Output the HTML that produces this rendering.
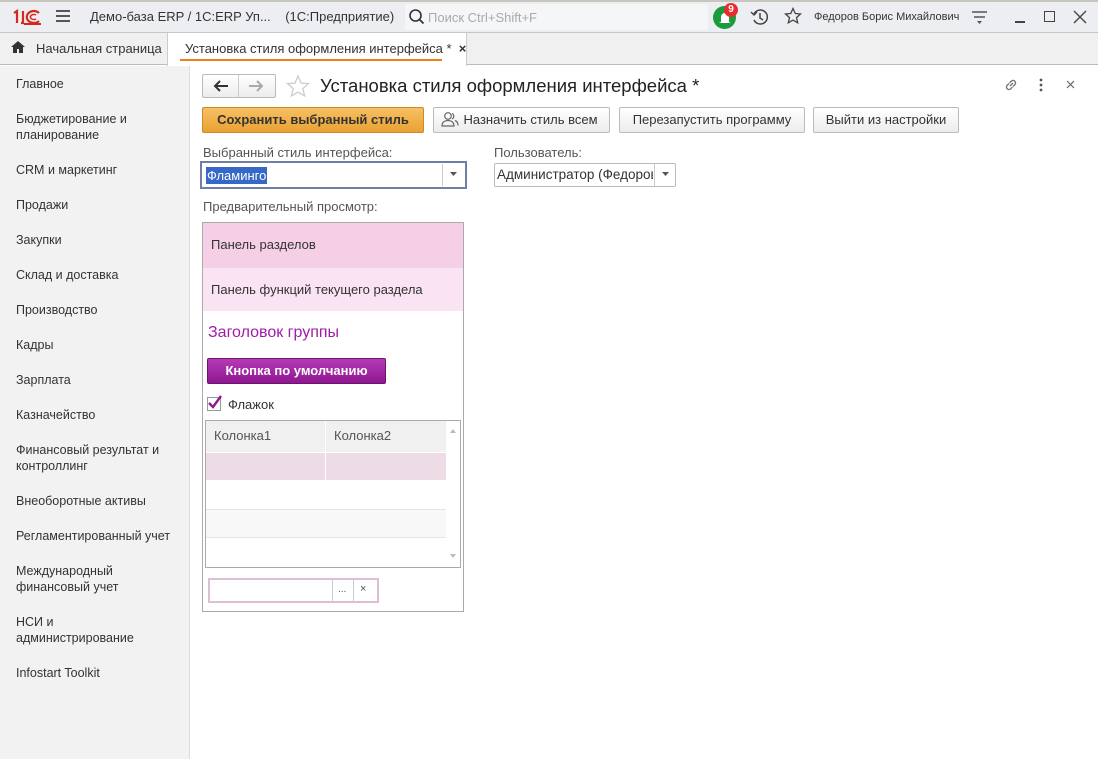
<!DOCTYPE html>
<html><head><meta charset="utf-8"><style>
*{box-sizing:border-box;margin:0;padding:0}
body{width:1098px;height:759px;overflow:hidden;font-family:"Liberation Sans",sans-serif;font-size:13px;color:#333;background:#fff;position:relative}
.a{position:absolute;white-space:nowrap}
.btn{position:absolute;height:26px;border:1px solid #bbb;border-radius:2px;background:linear-gradient(#fff,#ececec);font-size:13px;text-align:center;line-height:24px;color:#333}
.side div{position:absolute;left:16px;font-size:12.5px;color:#333;line-height:16px}
svg{position:absolute}
</style></head><body>
<div class="a" style="left:0;top:0;width:1098px;height:33px;background:#eceef2;border-top:2px solid #c8c4be;border-bottom:1px solid #c6c6c6"></div>
<svg style="left:12px;top:9px" width="30" height="16" viewBox="0 0 30 16"><path d="M2 4l3-2v12M9 14h2V2" stroke="#d42a1e" stroke-width="2.2" fill="none"/><path d="M27 4a7 6 0 1 0 0 8" stroke="#d42a1e" stroke-width="2.2" fill="none"/><path d="M24 6a3.5 2.5 0 1 0 0 4" stroke="#d42a1e" stroke-width="1.5" fill="none"/><path d="M12 15h17" stroke="#d42a1e" stroke-width="2"/></svg>
<div class="a" style="left:56px;top:10px;width:14px;height:2px;background:#555;box-shadow:0 5px 0 #555,0 10px 0 #555"></div>
<div class="a" style="left:90px;top:9px;font-size:13px;color:#333">Демо-база ERP / 1С:ERP Уп...&nbsp;&nbsp;&nbsp; (1С:Предприятие)</div>
<div class="a" style="left:405px;top:4px;width:303px;height:26px;background:#f5f6f8;border-radius:2px"></div>
<svg style="left:408px;top:8px" width="18" height="18"><circle cx="7.5" cy="7.5" r="5.5" stroke="#333" stroke-width="1.6" fill="none"/><path d="M11.5 11.5l4 4" stroke="#333" stroke-width="1.8"/></svg>
<div class="a" style="left:428px;top:10px;color:#aaa;font-size:13px">Поиск Ctrl+Shift+F</div>
<div class="a" style="left:713px;top:6px;width:23px;height:23px;border-radius:50%;background:#1c9a3e"></div>
<svg style="left:716px;top:9px" width="18" height="18"><path d="M5 13V8a4 4 0 0 1 8 0v5l2 1H3z" fill="#fff"/></svg>
<div class="a" style="left:724px;top:3px;width:14px;height:14px;border-radius:50%;background:#e62e2e;color:#fff;font-size:10px;font-weight:bold;text-align:center;line-height:14px">9</div>
<svg style="left:750px;top:8px" width="20" height="18"><path d="M4 6a7 7 0 1 1 0 6" stroke="#444" stroke-width="1.5" fill="none"/><path d="M1 4l3 3 3-3" stroke="#444" stroke-width="1.4" fill="none"/><path d="M10 5v5l3 2" stroke="#444" stroke-width="1.5" fill="none"/></svg>
<svg style="left:784px;top:7px" width="18" height="18"><path d="M9 1.5l2.3 5 5.2.5-4 3.6 1.2 5.2L9 13.1l-4.7 2.7 1.2-5.2-4-3.6 5.2-.5z" stroke="#444" stroke-width="1.3" fill="none"/></svg>
<div class="a" style="left:814px;top:11px;font-size:11px;color:#333">Федоров Борис Михайлович</div>
<svg style="left:971px;top:10px" width="18" height="16"><path d="M1 2h15M3 7h11" stroke="#555" stroke-width="1.5"/><path d="M6 11h5l-2.5 3z" fill="#555"/></svg>
<div class="a" style="left:1015px;top:21px;width:10px;height:1.5px;background:#444"></div>
<div class="a" style="left:1044px;top:11px;width:11px;height:11px;border:1.5px solid #444"></div>
<svg style="left:1073px;top:10px" width="14" height="14"><path d="M1 1l12 12M13 1L1 13" stroke="#444" stroke-width="1.4"/></svg>

<div class="a" style="left:0;top:33px;width:1098px;height:32px;background:#f0f0f0;border-bottom:1px solid #bbb"></div>
<svg style="left:10px;top:40px" width="16" height="14"><path d="M8 1L1 7h2v6h4V9h2v4h4V7h2z" fill="#333"/></svg>
<div class="a" style="left:36px;top:41px;font-size:13px">Начальная страница</div>
<div class="a" style="left:167px;top:33px;width:300px;height:33px;background:#fff;border-left:1px solid #ccc;border-right:1px solid #ccc"></div>
<div class="a" style="left:185px;top:41px;font-size:13px">Установка стиля оформления интерфейса *&nbsp; <b>×</b></div>
<div class="a" style="left:180px;top:59px;width:262px;height:2px;background:#f07e13"></div>

<div class="a" style="left:0;top:66px;width:190px;height:693px;background:#f2f2f2;border-right:1px solid #ddd"></div>
<div class="side">
<div style="top:76px">Главное</div>
<div style="top:111px">Бюджетирование и<br>планирование</div>
<div style="top:162px">CRM и маркетинг</div>
<div style="top:197px">Продажи</div>
<div style="top:232px">Закупки</div>
<div style="top:267px">Склад и доставка</div>
<div style="top:302px">Производство</div>
<div style="top:337px">Кадры</div>
<div style="top:372px">Зарплата</div>
<div style="top:407px">Казначейство</div>
<div style="top:442px">Финансовый результат и<br>контроллинг</div>
<div style="top:493px">Внеоборотные активы</div>
<div style="top:528px">Регламентированный учет</div>
<div style="top:563px">Международный<br>финансовый учет</div>
<div style="top:614px">НСИ и<br>администрирование</div>
<div style="top:665px">Infostart Toolkit</div>
</div>

<div class="btn" style="left:202px;top:74px;width:74px;height:24px;padding:0"></div>
<div class="a" style="left:238px;top:75px;width:1px;height:22px;background:#ccc"></div>
<svg style="left:212px;top:79px" width="18" height="14"><path d="M16 7H3M8 2L3 7l5 5" stroke="#333" stroke-width="2" fill="none"/></svg>
<svg style="left:247px;top:79px" width="18" height="14"><path d="M2 7h13M10 2l5 5-5 5" stroke="#aaa" stroke-width="2" fill="none"/></svg>
<svg style="left:286px;top:74px" width="24" height="24"><path d="M12 2l3 7 7.5.6-5.7 5 1.8 7.3L12 18l-6.6 3.9 1.8-7.3-5.7-5L9 9z" stroke="#ccc" stroke-width="1.3" fill="none"/></svg>
<div class="a" style="left:320px;top:75px;font-size:18.5px;color:#222">Установка стиля оформления интерфейса *</div>
<svg style="left:1003px;top:77px" width="16" height="16"><path d="M7 9l3-3M6 6.5L4 8.5a2.5 2.5 0 0 0 3.5 3.5l2-2M10 9.5l2-2A2.5 2.5 0 0 0 8.5 4l-2 2" stroke="#777" stroke-width="1.4" fill="none"/></svg>
<svg style="left:1037px;top:78px" width="8" height="14"><circle cx="4" cy="2" r="1.4" fill="#555"/><circle cx="4" cy="7" r="1.4" fill="#555"/><circle cx="4" cy="12" r="1.4" fill="#555"/></svg>
<svg style="left:1066px;top:80px" width="9" height="9"><path d="M1 1l7 7M8 1L1 8" stroke="#666" stroke-width="1.2"/></svg>

<div class="btn" style="left:202px;top:107px;width:222px;background:linear-gradient(#f7c063,#e8a232);border-color:#c98a2a;font-weight:bold;color:#333">Сохранить выбранный стиль</div>
<div class="btn" style="left:433px;top:107px;width:177px;padding-left:18px">Назначить стиль всем</div>
<svg style="left:441px;top:111px" width="18" height="17"><circle cx="7" cy="5" r="3.3" stroke="#666" stroke-width="1.2" fill="none"/><path d="M1 15c0-4 3-5.5 6-5.5s6 1.5 6 5.5z" stroke="#666" stroke-width="1.2" fill="none"/><path d="M11 2.5a3 3 0 0 1 0 5.5M14 9.5c2 .7 3 2.2 3 5" stroke="#666" stroke-width="1.2" fill="none"/></svg>
<div class="btn" style="left:619px;top:107px;width:186px">Перезапустить программу</div>
<div class="btn" style="left:813px;top:107px;width:146px">Выйти из настройки</div>

<div class="a" style="left:203px;top:145px;color:#555">Выбранный стиль интерфейса:</div>
<div class="a" style="left:200px;top:161px;width:267px;height:28px;border:2px solid #6e7fa8"></div>
<div class="a" style="left:206px;top:167px;background:#3669c7;color:#fff;padding:0 1px;line-height:17px">Фламинго</div>
<div class="a" style="left:442px;top:164px;width:1px;height:22px;background:#ccc"></div>
<svg style="left:450px;top:172px" width="7" height="4"><path d="M0 0h7L3.5 4z" fill="#555"/></svg>
<div class="a" style="left:494px;top:145px;color:#555">Пользователь:</div>
<div class="a" style="left:494px;top:163px;width:182px;height:24px;border:1px solid #bbb;border-radius:2px"></div>
<div class="a" style="left:497px;top:167px;font-size:13.5px;color:#333;width:156px;overflow:hidden">Администратор (Федоров</div>
<div class="a" style="left:654px;top:164px;width:1px;height:22px;background:#ccc"></div>
<svg style="left:662px;top:172px" width="7" height="4"><path d="M0 0h7L3.5 4z" fill="#555"/></svg>
<div class="a" style="left:203px;top:199px;color:#555">Предварительный просмотр:</div>

<div class="a" style="left:202px;top:222px;width:262px;height:390px;border:1px solid #aaa"></div>
<div class="a" style="left:203px;top:223px;width:260px;height:45px;background:#f5cfe6"></div>
<div class="a" style="left:211px;top:237px;color:#333">Панель разделов</div>
<div class="a" style="left:203px;top:268px;width:260px;height:43px;background:#fae3f2"></div>
<div class="a" style="left:211px;top:282px;color:#333">Панель функций текущего раздела</div>
<div class="a" style="left:208px;top:324px;font-size:16px;color:#a01ca8">Заголовок группы</div>
<div class="a" style="left:207px;top:358px;width:179px;height:26px;border:1px solid #6e1370;border-radius:2px;background:linear-gradient(#b53ab6,#8e1890);color:#fff;font-weight:bold;text-align:center;line-height:24px">Кнопка по умолчанию</div>
<div class="a" style="left:207px;top:397px;width:14px;height:14px;border:1px solid #999;background:#fff"></div>
<svg style="left:207px;top:394px" width="16" height="16"><path d="M2 9l4 4 8-11" stroke="#8e1890" stroke-width="2.4" fill="none"/></svg>
<div class="a" style="left:228px;top:397px;color:#333">Флажок</div>
<div class="a" style="left:205px;top:420px;width:256px;height:148px;border:1px solid #aaa"></div>
<div class="a" style="left:206px;top:421px;width:240px;height:31px;background:#f0f0f0"></div>
<div class="a" style="left:325px;top:421px;width:1px;height:58px;background:#fff"></div>
<div class="a" style="left:214px;top:428px;color:#555">Колонка1</div>
<div class="a" style="left:334px;top:428px;color:#555">Колонка2</div>
<div class="a" style="left:206px;top:453px;width:240px;height:27px;background:#eddce5"></div>
<div class="a" style="left:325px;top:453px;width:1px;height:27px;background:#fff"></div>
<div class="a" style="left:206px;top:509px;width:240px;height:29px;background:#f8f8f8;border-top:1px solid #e6e6e6;border-bottom:1px solid #e6e6e6"></div>
<svg style="left:450px;top:429px" width="6" height="4"><path d="M0 4h6L3 0z" fill="#bbb"/></svg>
<svg style="left:450px;top:554px" width="6" height="4"><path d="M0 0h6L3 4z" fill="#bbb"/></svg>
<div class="a" style="left:208px;top:578px;width:171px;height:25px;border:2px solid #dcbfd3"></div>
<div class="a" style="left:332px;top:580px;width:1px;height:21px;background:#ccc"></div>
<div class="a" style="left:353px;top:580px;width:1px;height:21px;background:#ccc"></div>
<div class="a" style="left:338px;top:584px;font-size:10px;color:#555">...</div>
<div class="a" style="left:360px;top:583px;font-size:11px;color:#555">×</div>
</body></html>
